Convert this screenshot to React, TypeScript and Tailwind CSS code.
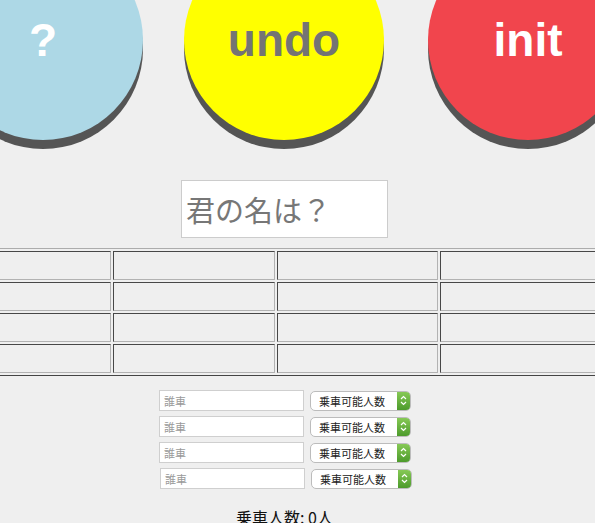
import React from 'react'

const rows = [0, 1, 2, 3]
const cols = [0, 1, 2, 3]

function Circle({ label, className, textClass }: { label: string; className: string; textClass: string }) {
  return (
    <div
      className={`flex h-[200px] w-[200px] shrink-0 items-center justify-center rounded-full shadow-[0_9px_0_#555] ${className}`}
    >
      <span className={`font-['Liberation_Sans',Arial,sans-serif] text-[46px] font-bold leading-none ${textClass}`}>
        {label}
      </span>
    </div>
  )
}

function FakeSelect() {
  return (
    <div className="ml-[6px] flex h-[20px] w-[101px] items-stretch rounded-[5px] border border-[#bcbcbc] bg-white">
      <span className="flex-1 pl-[8px] text-[11px] leading-[18px] text-[#222]">乗車可能人数</span>
      <span className="flex w-[13px] items-center justify-center rounded-r-[4px] bg-gradient-to-b from-[#86c955] to-[#4c9b2b]">
        <svg width="7" height="11" viewBox="0 0 7 11" fill="none">
          <path d="M1 4 L3.5 1.5 L6 4" stroke="white" strokeWidth="1.2" />
          <path d="M1 7 L3.5 9.5 L6 7" stroke="white" strokeWidth="1.2" />
        </svg>
      </span>
    </div>
  )
}

export default function App() {
  return (
    <div className="h-[523px] w-full overflow-hidden bg-[#efefef] font-['Noto_Sans_CJK_JP',sans-serif]">
      {/* Buttons */}
      <div className="-mt-[60px] flex">
        <Circle label="?" className="-ml-[57px] bg-[#add8e6]" textClass="text-white" />
        <Circle label="undo" className="ml-[41px] bg-[#ffff00]" textClass="text-[#747474]" />
        <Circle label="init" className="ml-[44px] bg-[#f1454d]" textClass="text-white" />
      </div>

      <div className="flex w-[569px] flex-col items-center">
        <input
          placeholder="君の名は？"
          className="mt-[40px] h-[58px] w-[207px] border border-[#cccccc] bg-white pl-[4px] text-[29px] text-[#333] outline-none placeholder:text-[#777]"
        />

        <table className="mt-[10px] ml-[-54px] w-[659px] shrink-0 table-fixed self-start border-separate border-spacing-[2px] border border-t-[#acacac] border-l-[#acacac] border-r-[#444] border-b-[#444]">
          <tbody>
            {rows.map(r => (
              <tr key={r}>
                {cols.map(c => (
                  <td
                    key={c}
                    className="h-[29px] border border-t-[#474747] border-l-[#474747] border-b-[#b2b2b2] border-r-[#b2b2b2] p-0"
                  />
                ))}
              </tr>
            ))}
          </tbody>
        </table>

        {/* Cars */}
        <div className="mt-[14px] ml-[2px] flex flex-col gap-[5px]">
          {rows.map(r => (
            <div key={r} className={`flex items-center ${r === 3 ? 'pl-[1px]' : ''}`}>
              <input
                placeholder="誰車"
                className="h-[21px] w-[145px] border border-[#cfcfcf] bg-white pl-[4px] text-[11px] outline-none placeholder:text-[#9a9a9a]"
              />
              <FakeSelect />
            </div>
          ))}
        </div>

        <p className="mt-[16px] text-[16px] leading-[24px] text-[#111]">乗車人数: 0人</p>
      </div>
    </div>
  )
}
